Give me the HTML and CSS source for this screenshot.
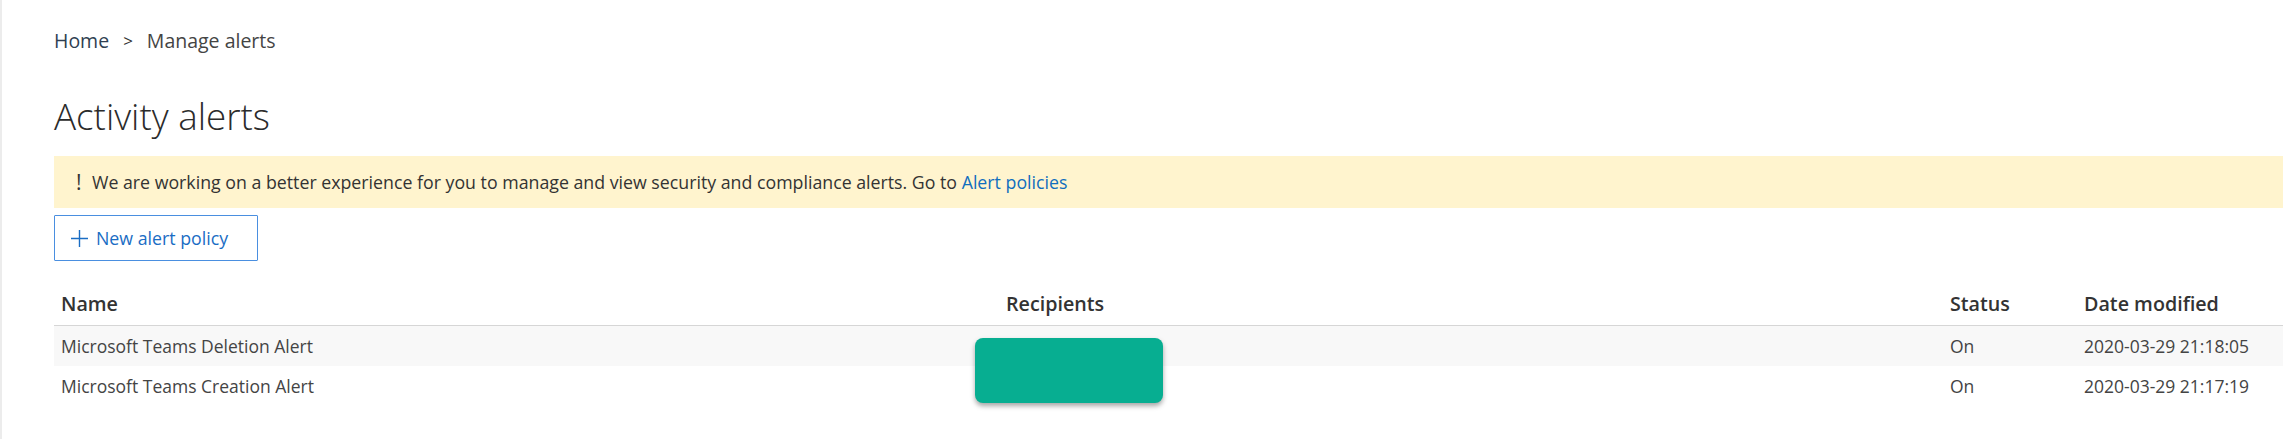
FILE: index.html
```html
<!DOCTYPE html>
<html lang="en">
<head>
<meta charset="utf-8">
<title>Activity alerts</title>
<link rel="stylesheet" href="styles.css">
</head>
<body>
<div class="page">
  <nav class="breadcrumb">
    <span class="crumb-home">Home</span>
    <span class="crumb-sep">&gt;</span>
    <span class="crumb-current">Manage alerts</span>
  </nav>
  <h1 class="title">Activity alerts</h1>
  <div class="banner">
    <span class="banner-icon">!</span>
    <span class="banner-text">We are working on a better experience for you to manage and view security and compliance alerts. Go to <a class="link" href="#">Alert policies</a></span>
  </div>
  <button class="new-btn" type="button">
    <svg class="plus" width="17" height="17" viewBox="0 0 17 17"><path d="M8.5 0V17M0 8.5H17" stroke="#1a6dc4" stroke-width="1.4" fill="none"/></svg>
    <span>New alert policy</span>
  </button>
  <div class="table">
    <div class="row head">
      <div class="cell">Name</div>
      <div class="cell">Recipients</div>
      <div class="cell">Status</div>
      <div class="cell">Date modified</div>
    </div>
    <div class="row alt">
      <div class="cell">Microsoft Teams Deletion Alert</div>
      <div class="cell"></div>
      <div class="cell">On</div>
      <div class="cell">2020-03-29 21:18:05</div>
    </div>
    <div class="row">
      <div class="cell">Microsoft Teams Creation Alert</div>
      <div class="cell"></div>
      <div class="cell">On</div>
      <div class="cell">2020-03-29 21:17:19</div>
    </div>
    <div class="redact"></div>
  </div>
</div>
</body>
</html>
```
FILE: styles.css
```css
html, body {
  margin: 0;
  padding: 0;
  background: #ffffff;
}
body {
  font-family: "Open Sans", "Noto Sans", "Liberation Sans", sans-serif;
  color: #333333;
  overflow: hidden;
}
.page {
  border-left: 2px solid #ececec;
  padding: 27px 0 0 52px;
  min-height: 439px;
  box-sizing: border-box;
}
.breadcrumb {
  height: 28px;
  line-height: 28px;
  font-size: 19.5px;
  display: flex;
  gap: 14px;
}
.crumb-home { color: #2f3f52; }
.crumb-sep { color: #333333; font-size: 17px; }
.crumb-current { color: #444444; }
.title {
  margin: 35px 0 0 0;
  font-size: 36.8px;
  font-weight: 300;
  line-height: 52px;
  height: 52px;
  color: #2b2b2b;
}
.banner {
  margin-top: 14px;
  height: 52px;
  background: #fff4ce;
  display: flex;
  align-items: center;
  padding-left: 22px;
  font-size: 17.75px;
  color: #333333;
}
.banner-icon {
  font-size: 21px;
  width: 16px;
  color: #333333;
}
.link {
  color: #106ebe;
  text-decoration: none;
}
.new-btn {
  margin-top: 7px;
  height: 46px;
  width: 204px;
  box-sizing: border-box;
  border: 1px solid #4a8fe0;
  border-radius: 1px;
  background: #ffffff;
  display: flex;
  align-items: center;
  gap: 8px;
  padding: 0 0 0 16px;
  font-family: inherit;
  font-size: 17.75px;
  color: #1a6dc4;
  cursor: pointer;
}
.plus { flex: none; }
.table {
  position: relative;
  margin-top: 21px;
}
.row {
  display: grid;
  grid-template-columns: 945px 944px 134px 1fr;
  height: 40px;
  align-items: center;
  font-size: 17.5px;
  color: #444444;
}
.row.head {
  height: 43px;
  border-bottom: 1px solid #d6d6d6;
  font-size: 19.7px;
  font-weight: 600;
  color: #333333;
}
.row.alt { background: #f8f8f8; }
.cell {
  padding-left: 7px;
  white-space: nowrap;
}
.redact {
  position: absolute;
  left: 921px;
  top: 56px;
  width: 188px;
  height: 65px;
  background: #07ae91;
  border-radius: 8px;
  box-shadow: 0 3px 5px rgba(0, 0, 0, 0.35);
}
```
